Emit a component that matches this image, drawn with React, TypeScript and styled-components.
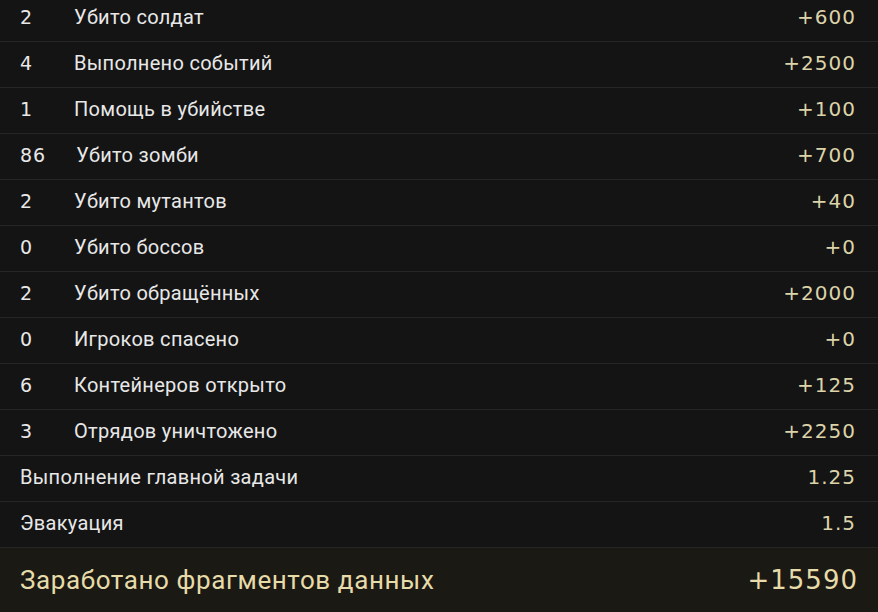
import styled, { createGlobalStyle } from "styled-components";

const Global = createGlobalStyle`
  html, body {
    margin: 0;
    padding: 0;
    background: #141414;
    overflow: hidden;
  }
  body {
    font-family: Roboto, "Liberation Sans", sans-serif;
  }
  * {
    box-sizing: border-box;
  }
`;

const numFont = `"DejaVu Sans", Roboto, sans-serif`;

const Page = styled.div`
  width: 878px;
  height: 612px;
  display: flex;
  flex-direction: column;
  background: #141414;
  overflow: hidden;
`;

const List = styled.div`
  display: flex;
  flex-direction: column;
  margin-top: -4px;
`;

const Row = styled.div`
  display: flex;
  align-items: center;
  justify-content: space-between;
  height: 46px;
  padding: 0 22px 4px 20px;
  border-bottom: 1px solid #262626;
  font-size: 20px;
  color: #e8e8e8;
  letter-spacing: 0.3px;
`;

const Left = styled.div`
  display: flex;
  align-items: center;
  gap: 30px;
`;

const Count = styled.span`
  min-width: 24px;
  font-family: ${numFont};
  font-size: 19px;
  letter-spacing: 1px;
`;

const Value = styled.span`
  color: #dcd3a9;
  font-family: ${numFont};
  letter-spacing: 1px;
`;

const Total = styled.div`
  flex: 1;
  display: flex;
  align-items: center;
  justify-content: space-between;
  padding: 0 20px;
  background: #1b1914;
  color: #e6dba9;
  font-size: 26px;
  letter-spacing: 0.6px;
`;

const TotalValue = styled.span`
  font-family: ${numFont};
  letter-spacing: 1px;
`;

const stats = [
  { count: 2, label: "Убито солдат", value: "+600" },
  { count: 4, label: "Выполнено событий", value: "+2500" },
  { count: 1, label: "Помощь в убийстве", value: "+100" },
  { count: 86, label: "Убито зомби", value: "+700" },
  { count: 2, label: "Убито мутантов", value: "+40" },
  { count: 0, label: "Убито боссов", value: "+0" },
  { count: 2, label: "Убито обращённых", value: "+2000" },
  { count: 0, label: "Игроков спасено", value: "+0" },
  { count: 6, label: "Контейнеров открыто", value: "+125" },
  { count: 3, label: "Отрядов уничтожено", value: "+2250" },
];

const multipliers = [
  { label: "Выполнение главной задачи", value: "1.25" },
  { label: "Эвакуация", value: "1.5" },
];

export default function App() {
  return (
    <>
      <Global />
      <Page>
        <List>
          {stats.map((s) => (
            <Row key={s.label}>
              <Left>
                <Count>{s.count}</Count>
                <span>{s.label}</span>
              </Left>
              <Value>{s.value}</Value>
            </Row>
          ))}
          {multipliers.map((m) => (
            <Row key={m.label}>
              <span>{m.label}</span>
              <Value>{m.value}</Value>
            </Row>
          ))}
        </List>
        <Total>
          <span>Заработано фрагментов данных</span>
          <TotalValue>+15590</TotalValue>
        </Total>
      </Page>
    </>
  );
}
